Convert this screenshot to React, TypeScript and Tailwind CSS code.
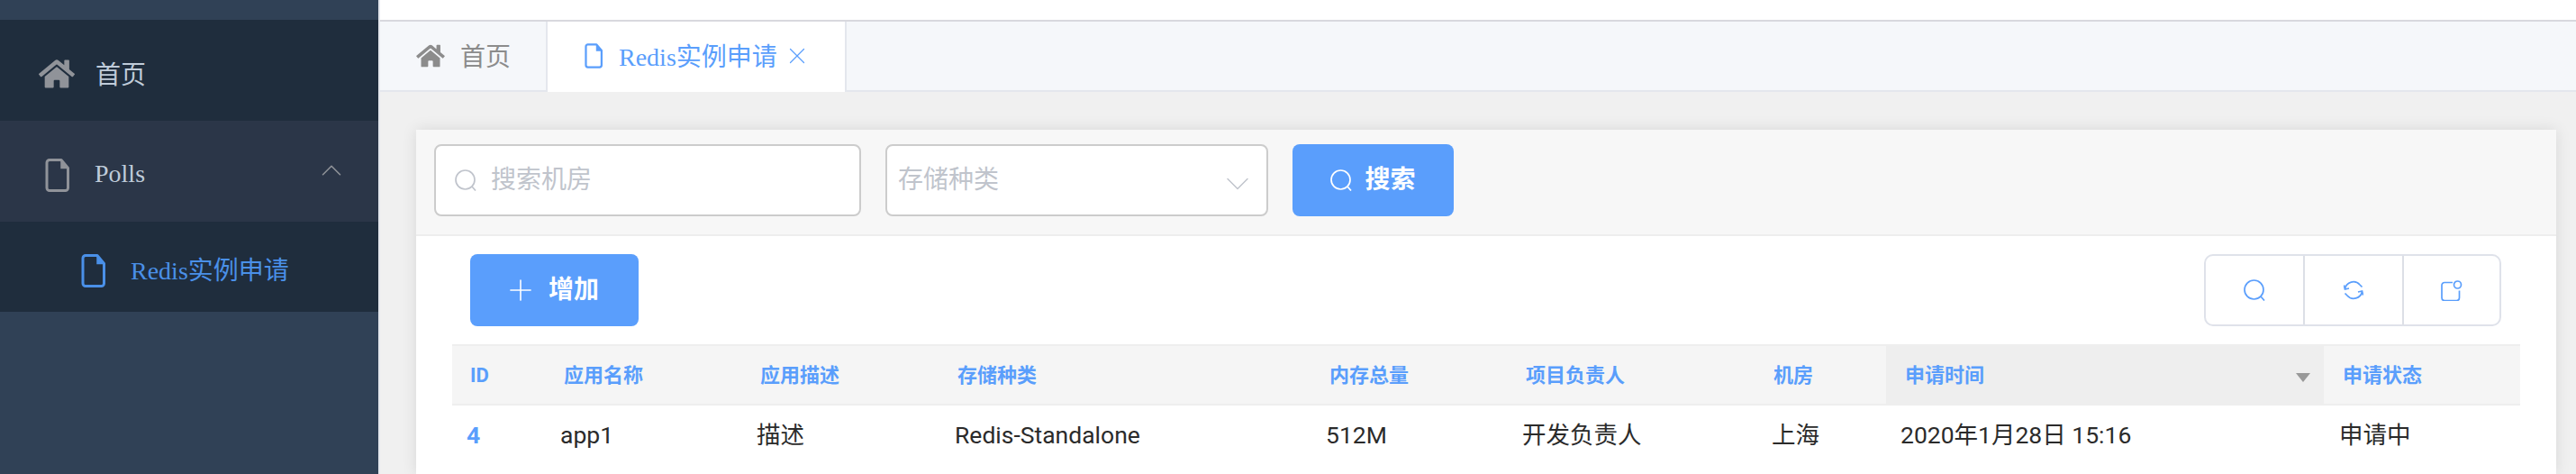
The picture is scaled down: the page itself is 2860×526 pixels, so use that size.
import { FaHome } from "react-icons/fa";
import { ChevronDown, ChevronUp, Plus, X } from "lucide-react";

const sans = "font-['Roboto','Noto_Sans_CJK_SC',sans-serif]";
const serif = "font-['Liberation_Serif','Noto_Sans_CJK_SC',serif]";

function FileIcon({ className }: { className: string }) {
  return (
    <svg viewBox="0 0 27 37" className={className} fill="none" stroke="currentColor" strokeWidth="3">
      <path d="M5 1.500h13l7.500 9v22a3 3 0 0 1-3 3h-17.500a3 3 0 0 1-3-3v-28a3 3 0 0 1 3-3z" strokeLinejoin="round" />
      <path d="M18 2v8.500h7" fill="currentColor" strokeWidth="1.500" />
    </svg>
  );
}

function SearchIcon({ className }: { className: string }) {
  return (
    <svg viewBox="0 0 24 24" className={className} fill="none" stroke="currentColor" strokeWidth="1.700">
      <circle cx="11.500" cy="11.500" r="10.500" />
      <path d="M19 19l4 4.500" />
    </svg>
  );
}

function RefreshIcon({ className }: { className: string }) {
  return (
    <svg viewBox="0 0 22 22" className={className} fill="none" stroke="currentColor" strokeWidth="1.700">
      <path d="M1.500 9.500A9.500 9.500 0 0 1 18 5l2.500 2.500" />
      <path d="M20.500 12.500A9.500 9.500 0 0 1 4 17l-2.500-2.500" />
      <path d="M0.500 5.500l1 4.500 4.500-1M21.500 16.500l-1-4.500-4.500 1" />
    </svg>
  );
}

function PanelIcon({ className }: { className: string }) {
  return (
    <svg viewBox="0 0 24 23" className={className} fill="none" stroke="currentColor" strokeWidth="1.700">
      <path d="M13 2.500H4a3 3 0 0 0-3 3v14a3 3 0 0 0 3 3h13.500a3 3 0 0 0 3-3v-8" />
      <circle cx="18.500" cy="5" r="4" />
    </svg>
  );
}

const columns = [
  { title: "ID", value: "4", width: "w-[103px]", head: "pl-[20px]", body: "pl-[16px] font-bold text-[#5a9efc]" },
  { title: "应用名称", value: "app1", width: "w-[218px]", head: "pl-[21px]", body: "pl-[17px]" },
  { title: "应用描述", value: "描述", width: "w-[219px]", head: "pl-[21px]", body: "pl-[17px]" },
  { title: "存储种类", value: "Redis-Standalone", width: "w-[413px]", head: "pl-[21px]", body: "pl-[18px]" },
  { title: "内存总量", value: "512M", width: "w-[218px]", head: "pl-[21px]", body: "pl-[17px]" },
  { title: "项目负责人", value: "开发负责人", width: "w-[275px]", head: "pl-[21px]", body: "pl-[17px]" },
  { title: "机房", value: "上海", width: "w-[146px]", head: "pl-[21px]", body: "pl-[19px]" },
  { title: "申请时间", value: "2020年1月28日 15:16", width: "w-[486px]", head: "pl-[21px]", body: "pl-[16px]", sorted: true },
  { title: "申请状态", value: "申请中", width: "w-[218px]", head: "pl-[21px]", body: "pl-[17px]" },
];

export default function App() {
  return (
    <div className={`flex h-[526px] w-[2860px] overflow-hidden bg-[#f0f0f0] ${sans}`}>
      {/* sidebar */}
      <aside className={`w-[420px] shrink-0 bg-[#304156] pt-[22px] text-[28px] ${serif}`}>
        <div className="flex h-[112px] items-center bg-[#1f2d3d] pl-[43px] pt-[8px] text-[#bfcbd9]">
          <FaHome className="w-[40px] h-[36px] text-[#909399]" />
          <span className="ml-[23px] mt-[4px]">首页</span>
        </div>
        <div className="flex h-[112px] items-center bg-[#2b3648] pl-[50px] pr-[33px] pt-[8px] text-[#bfcbd9]">
          <FileIcon className="w-[27px] h-[37px] text-[#909399]" />
          <span className="ml-[28px] mb-[2px]">Polls</span>
          <ChevronUp className="ml-auto mb-[10px] w-[38px] h-[38px] text-[#909399]" strokeWidth={1} />
        </div>
        <div className="flex h-[100px] items-center bg-[#1f2d3d] pl-[90px] pt-[8px] text-[#4a90e8]">
          <FileIcon className="w-[27px] h-[37px]" />
          <span className="ml-[28px] mt-[2px]">Redis实例申请</span>
        </div>
      </aside>

      <main className="flex-1 flex flex-col border-l-2 border-[#e4e7ed]">
        <div className="h-[22px] shrink-0 bg-white" />
        {/* tabs */}
        <div className={`flex h-[80px] shrink-0 border-t-2 border-b-2 border-t-[#d8d8de] border-b-[#e4e7ed] bg-[#f5f7fa] text-[28px] ${serif}`}>
          <div className="flex w-[186px] items-center border-r-2 border-[#e4e7ed] pl-[40px] text-[#8c8c8c]">
            <FaHome className="w-[32px] h-[28px]" />
            <span className="ml-[17px] mt-[4px]">首页</span>
          </div>
          <div className="flex w-[332px] h-[78px] items-center border-r-2 border-[#e4e7ed] bg-white pl-[41px] pb-[2px] text-[#5a9efc]">
            <FileIcon className="w-[20px] h-[28px]" />
            <span className="ml-[18px] mt-[4px]">Redis实例申请</span>
            <X className="ml-[7px] w-[30px] h-[30px]" strokeWidth={1} />
          </div>
        </div>

        <div className="flex-1 pt-[42px] pl-[40px] pr-[22px]">
          <div className="h-full bg-white shadow-[0_0_16px_rgba(0,0,0,0.1)]">
            {/* search bar */}
            <div className="flex gap-[27px] border-b-2 border-[#eeeeee] bg-[#f7f7f7] pl-[20px] pt-[16px] pb-[20px] text-[28px]">
              <div className="flex h-[80px] w-[474px] items-center rounded-[8px] border-2 border-[#cccccc] bg-white pl-[21px] text-[#c0c4cc]">
                <SearchIcon className="w-[24px] h-[24px]" />
                <span className="ml-[16px]">搜索机房</span>
              </div>
              <div className="flex h-[80px] w-[425px] items-center rounded-[8px] border-2 border-[#cccccc] bg-white pl-[12px] pr-[10px] text-[#c0c4cc]">
                <span>存储种类</span>
                <ChevronDown className="ml-auto mt-[7px] w-[44px] h-[44px]" strokeWidth={0.8} />
              </div>
              <div className="flex h-[80px] w-[179px] items-center justify-center rounded-[8px] bg-[#5a9efc] font-bold text-white">
                <SearchIcon className="w-[24px] h-[24px]" />
                <span className="ml-[14px]">搜索</span>
              </div>
            </div>

            {/* actions */}
            <div className="flex justify-between pl-[60px] pr-[61px] pt-[20px]">
              <div className="flex h-[80px] w-[187px] items-center rounded-[8px] bg-[#5a9efc] pl-[37px] text-[28px] font-bold text-white">
                <Plus className="w-[38px] h-[38px]" strokeWidth={1} />
                <span className="ml-[12px]">增加</span>
              </div>
              <div className="flex h-[80px] w-[330px] divide-x-2 divide-[#dcdfe6] rounded-[10px] border-2 border-[#dfe2ea] text-[#5a9efc]">
                <div className="flex w-[110px] items-center justify-center">
                  <SearchIcon className="w-[24px] h-[24px]" />
                </div>
                <div className="flex w-[110px] items-center justify-center">
                  <RefreshIcon className="w-[22px] h-[22px]" />
                </div>
                <div className="flex flex-1 items-center justify-center">
                  <PanelIcon className="w-[24px] h-[23px]" />
                </div>
              </div>
            </div>

            {/* table */}
            <div className="mx-[40px] mt-[20px]">
              <div className="flex h-[68px] border-y-2 border-[#eeeeee] bg-[#f5f5f5] text-[22px] font-bold text-[#5a9efc]">
                {columns.map((c) => (
                  <div
                    key={c.title}
                    className={`relative flex items-center ${c.width} ${c.head} ${c.sorted ? "bg-[#eeeeee]" : ""}`}
                  >
                    {c.title}
                    {c.sorted && (
                      <span className="absolute right-[15px] top-[30px] border-x-[8px] border-t-[10px] border-x-transparent border-t-[#999999]" />
                    )}
                  </div>
                ))}
              </div>
              <div className="flex h-[66px] text-[26.5px] text-[#2b2b2b]">
                {columns.map((c) => (
                  <div key={c.title} className={`flex items-center ${c.width} ${c.body}`}>
                    {c.value}
                  </div>
                ))}
              </div>
            </div>
          </div>
        </div>
      </main>
    </div>
  );
}
